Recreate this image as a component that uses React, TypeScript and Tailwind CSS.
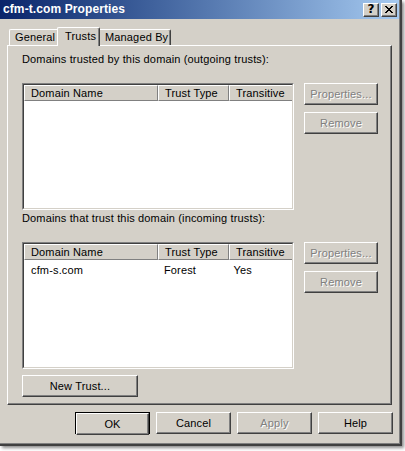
import clsx from "clsx"

const raised =
  "border border-t-white border-l-white border-r-[#404040] border-b-[#404040] shadow-[inset_-1px_-1px_0_#808080]"

function Btn({
  label,
  disabled,
  className,
}: {
  label: string
  disabled?: boolean
  className?: string
}) {
  return (
    <div
      className={clsx(
        "h-[22px] flex items-center justify-center bg-[#d4d0c8] text-[11px] tracking-[0.15px]",
        raised,
        disabled ? "text-[#808080] [text-shadow:1px_1px_0_#ffffff]" : "text-black",
        className
      )}
    >
      {label}
    </div>
  )
}

function ListView({ rows }: { rows: string[][] }) {
  const cols = [
    { name: "Domain Name", w: "w-[134px]" },
    { name: "Trust Type", w: "w-[71px]" },
    { name: "Transitive", w: "w-[65px]" },
  ]
  return (
    <div className="w-[272px] h-[127px] border border-t-[#808080] border-l-[#808080] border-r-white border-b-white">
      <div className="h-full bg-white border border-t-[#404040] border-l-[#404040] border-r-[#d4d0c8] border-b-[#d4d0c8] overflow-hidden">
        <div className="flex h-[16px] bg-[#d4d0c8]">
          {cols.map((c) => (
            <div
              key={c.name}
              className={clsx(
                "h-[16px] flex items-center pl-[6px] text-[11px] tracking-[0.15px] border border-t-white border-l-white border-r-[#808080] border-b-[#808080] shrink-0",
                c.w
              )}
            >
              {c.name}
            </div>
          ))}
          <div className="flex-1 border-t border-t-white border-b border-b-[#808080]" />
        </div>
        {rows.map((r, i) => (
          <div key={i} className="flex h-[16px] items-center text-[11px] tracking-[0.15px] mt-[2px]">
            <div className="w-[134px] pl-[7px]">{r[0]}</div>
            <div className="w-[71px] pl-[7px]">{r[1]}</div>
            <div className="w-[65px] pl-[6px]">{r[2]}</div>
          </div>
        ))}
      </div>
    </div>
  )
}

function Section({ label, rows }: { label: string; rows: string[][] }) {
  return (
    <>
      <div className="h-[13px] leading-[13px] text-[11px] tracking-[0.15px]">{label}</div>
      <div className="flex mt-[17px]">
        <ListView rows={rows} />
        <div className="flex flex-col gap-[7px] ml-[10px]">
          <Btn label="Properties..." disabled className="w-[74px]" />
          <Btn label="Remove" disabled className="w-[74px]" />
        </div>
      </div>
    </>
  )
}

export default function App() {
  return (
    <div className="w-[405px] h-[451px] bg-white overflow-hidden font-['Liberation_Sans',Arial,sans-serif] text-black">
      <div className="w-[402px] h-[446px] bg-[#d4d0c8] flex flex-col border-r-2 border-b-2 border-r-[#404040] border-b-[#404040] shadow-[inset_-1px_-1px_0_#808080,2px_2px_3px_rgba(0,0,0,0.45)]">
        {/* title bar */}
        <div className="w-[399px] h-[19px] flex items-center bg-gradient-to-r from-[#0a246a] to-[#a6caf0] pl-[3px] pr-[2px]">
          <span className="text-white font-bold text-[12px] leading-[19px] tracking-[0.1px]">
            cfm-t.com Properties
          </span>
          <div className="ml-auto flex gap-[2px]">
            <div className={clsx("w-[16px] h-[14px] bg-[#d4d0c8] flex items-center justify-center", raised)}>
              <span className="font-bold text-[12px] leading-[11px] font-['DejaVu_Sans',sans-serif]">?</span>
            </div>
            <div className={clsx("w-[16px] h-[14px] bg-[#d4d0c8] flex items-center justify-center", raised)}>
              <svg width="8" height="7" viewBox="0 0 8 7" shapeRendering="crispEdges">
                <path d="M0 0h2v1h-2zM6 0h2v1h-2zM1 1h2v1h-2zM5 1h2v1h-2zM2 2h4v1h-4zM3 3h2v1h-2zM2 4h4v1h-4zM1 5h2v1h-2zM5 5h2v1h-2zM0 6h2v1h-2zM6 6h2v1h-2z" fill="#000" />
              </svg>
            </div>
          </div>
        </div>

        {/* tabs */}
        <div className="flex items-end h-[18px] mt-[8px] pl-[9px] text-[11px] tracking-[0.15px]">
          <div className="w-[48px] h-[16px] border-t border-l border-t-white border-l-white rounded-tl-[2px] pl-[5px] leading-[15px]">
            General
          </div>
          <div className="relative z-10 -mb-px w-[43px] h-[19px] bg-[#d4d0c8] border-t border-l border-r border-t-white border-l-white border-r-[#404040] shadow-[inset_-1px_0_0_#808080] rounded-t-[2px] pl-[7px] leading-[16px]">
            Trusts
          </div>
          <div className="w-[71px] h-[16px] border-t border-r border-t-white border-r-[#404040] shadow-[inset_-1px_0_0_#808080] rounded-tr-[2px] pl-[5px] leading-[15px]">
            Managed By
          </div>
        </div>

        {/* panel */}
        <div className="w-[385px] h-[360px] ml-[7px] border border-t-white border-l-white border-r-[#404040] border-b-[#404040] shadow-[inset_-1px_-1px_0_#808080] pl-[14px] pt-[7px]">
          <Section label="Domains trusted by this domain (outgoing trusts):" rows={[]} />
          <div className="mt-[2px]" />
          <Section
            label="Domains that trust this domain (incoming trusts):"
            rows={[["cfm-s.com", "Forest", "Yes"]]}
          />
          <Btn label="New Trust..." className="w-[116px] mt-[6px]" />
        </div>

        {/* dialog buttons */}
        <div className="flex gap-[6px] mt-[7px] ml-[75px]">
          <div className="w-[75px] h-[22px] border border-black">
            <Btn label="OK" className="w-full h-[20px]" />
          </div>
          <Btn label="Cancel" className="w-[75px]" />
          <Btn label="Apply" disabled className="w-[75px]" />
          <Btn label="Help" className="w-[75px]" />
        </div>
      </div>
    </div>
  )
}
